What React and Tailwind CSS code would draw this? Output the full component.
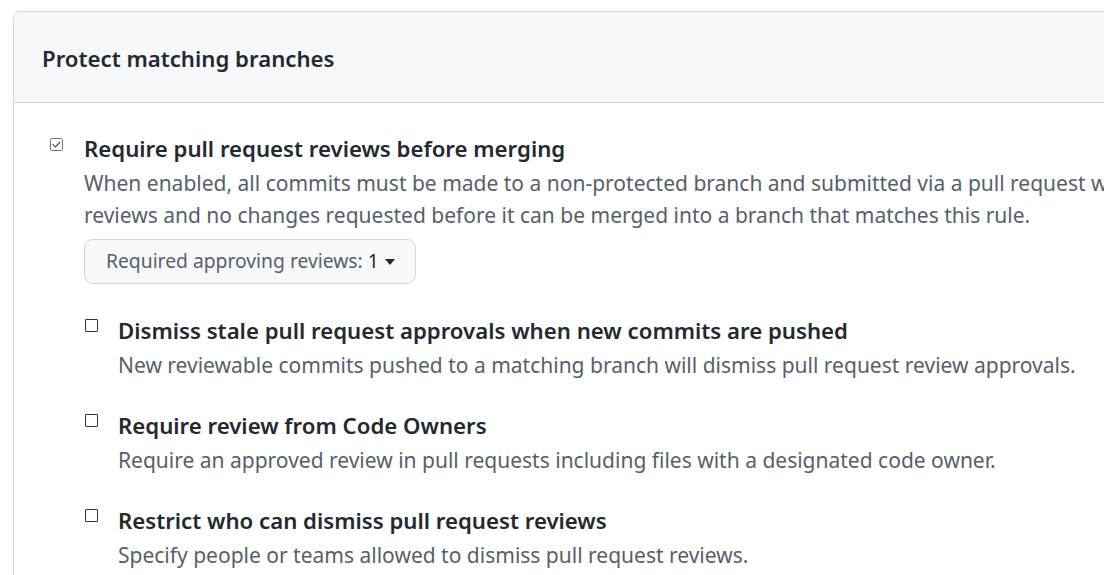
export default function App() {
  const font = { fontFamily: '"Noto Sans", "Open Sans", sans-serif' };

  const Check = ({ checked }) =>
    checked ? (
      <svg className="w-[13px] h-[13px] shrink-0" viewBox="0 0 13 13">
        <rect x="0.5" y="0.5" width="12" height="12" rx="1" fill="#fff" stroke="#6e7781" />
        <path d="M2.8 6.3l2.6 2.6L10.2 4" fill="none" stroke="#444c56" strokeWidth="1.1" />
      </svg>
    ) : (
      <span className="w-[13px] h-[13px] shrink-0 border border-[#333] bg-white rounded-[1px]" />
    );

  const Option = ({ title, desc }) => (
    <div className="flex items-start gap-[20px]">
      <div className="mt-[6px] flex">
        <Check />
      </div>
      <div>
        <div className="text-[22.2px] leading-[36px] font-semibold text-[#24292f] whitespace-nowrap">{title}</div>
        <div className="text-[21px] leading-[32px] text-[#57606a] whitespace-nowrap">{desc}</div>
      </div>
    </div>
  );

  return (
    <div className="w-[1104px] h-[575px] overflow-hidden bg-white pt-[11px] pl-[13px]" style={font}>
      <div className="w-[1200px] border border-[#d0d7de] rounded-[7px] overflow-hidden">
        {/* Header */}
        <div className="h-[91px] bg-[#f6f8fa] border-b border-[#d0d7de] flex items-center pl-[28px] pt-[4px]">
          <h2 className="text-[22.2px] font-semibold text-[#24292f]">Protect matching branches</h2>
        </div>

        {/* Body */}
        <div className="pt-[28px] pl-[36px] pb-[80px]">
          <div className="flex items-start gap-[21px]">
            <div className="mt-[7px] flex">
              <Check checked />
            </div>
            <div>
              <div className="text-[22.2px] leading-[36px] font-semibold text-[#24292f] whitespace-nowrap">
                Require pull request reviews before merging
              </div>
              <div className="text-[21px] leading-[32px] text-[#57606a] whitespace-nowrap">
                When enabled, all commits must be made to a non-protected branch and submitted via a pull request with the required number of approving
                <br />
                reviews and no changes requested before it can be merged into a branch that matches this rule.
              </div>
              <button className="mt-[8px] h-[45px] pl-[21px] pr-[20px] flex items-center gap-[6px] rounded-[9px] border border-[#d0d7de] bg-[#f6f8fa] text-[19.3px] text-[#57606a]">
                <span>
                  Required approving reviews: <span className="text-[#24292f]">1</span>
                </span>
                <svg className="w-[10px] h-[6px]" viewBox="0 0 10 6">
                  <path d="M0 0h10L5 6z" fill="#24292f" />
                </svg>
              </button>

              <div className="ml-[1px] mt-[29px] flex flex-col gap-[27px]">
                <Option
                  title="Dismiss stale pull request approvals when new commits are pushed"
                  desc="New reviewable commits pushed to a matching branch will dismiss pull request review approvals."
                />
                <Option
                  title="Require review from Code Owners"
                  desc="Require an approved review in pull requests including files with a designated code owner."
                />
                <Option
                  title="Restrict who can dismiss pull request reviews"
                  desc="Specify people or teams allowed to dismiss pull request reviews."
                />
              </div>
            </div>
          </div>
        </div>
      </div>
    </div>
  );
}
